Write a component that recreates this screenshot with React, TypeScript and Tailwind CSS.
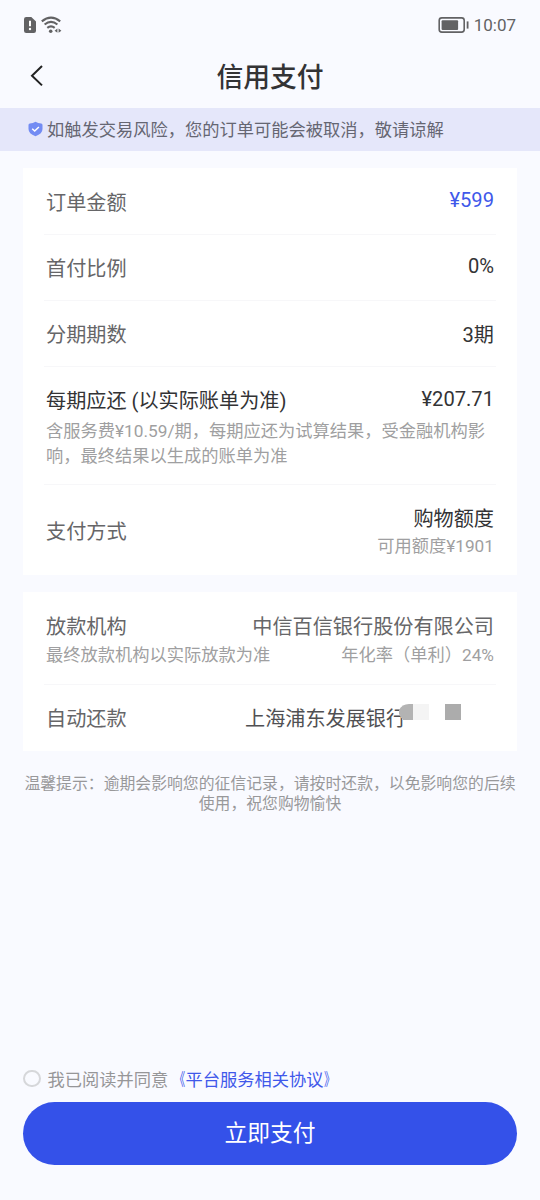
import type { ReactNode } from "react";

function StatusBar() {
  return (
    <div className="flex h-12 items-center justify-between pl-[23px] pr-6 pt-px text-[#626264]">
      <div className="flex items-center gap-[4px]">
        <svg width="14" height="18" viewBox="0 0 14 18">
          <path d="M3.2 1H8.3L13 5.4V14.8Q13 17 10.8 17H3.2Q1 17 1 14.8V3.2Q1 1 3.2 1Z" fill="currentColor" />
          <path d="M7 4.8V10.2" stroke="#fff" strokeWidth="2" />
          <circle cx="7" cy="13" r="1.2" fill="#fff" />
        </svg>
        <svg width="21" height="18" viewBox="0 0 21 18" fill="none" stroke="currentColor">
          <path d="M.8 5.3Q10 -2 19.2 5.3" strokeWidth="2.2" />
          <path d="M3.6 8.5Q10 3.4 16.4 8.5" strokeWidth="2.2" />
          <path d="M6.3 11.8Q10 8.9 13.7 11.8" strokeWidth="2.2" />
          <circle cx="9.7" cy="15.2" r="1.8" fill="currentColor" stroke="none" />
          <path d="M16.4 12.6V16.8L13.6 14.7ZM17.6 12.6V16.8L20.4 14.7Z" fill="currentColor" stroke="none" />
        </svg>
      </div>
      <div className="flex items-center gap-[5px]">
        <svg width="31" height="16" viewBox="0 0 31 16" fill="none">
          <rect x="1.2" y=".9" width="25" height="14.2" rx="2.6" stroke="currentColor" strokeWidth="1.6" />
          <rect x="3.6" y="3.3" width="16.5" height="9.6" rx="1" fill="currentColor" />
          <path d="M29.6 4.4V11.6" stroke="currentColor" strokeWidth="1.8" />
        </svg>
        <span className="text-[17px] leading-5">10:07</span>
      </div>
    </div>
  );
}

function Row({ label, children, className }: { label: string; children: ReactNode; className: string }) {
  return (
    <div className={"flex justify-between border-[#f7f7f9] px-[2px] text-[20.15px] leading-6 " + className}>
      <span className="text-[#666668]">{label}</span>
      {children}
    </div>
  );
}

export default function App() {
  return (
    <div className="flex h-[1200px] w-[540px] flex-col bg-[#f9faff] font-[Roboto,'Noto_Sans_CJK_SC',sans-serif] text-[#333335]">
      <StatusBar />
      <header className="grid h-[60px] grid-cols-[60px_1fr_60px] items-center pb-1">
        <svg className="ml-[29px]" width="16" height="24" viewBox="0 0 16 24" fill="none" stroke="#222" strokeWidth="2">
          <path d="M13 2L3 11.7L13 21.4" />
        </svg>
        <h1 className="pt-[3px] text-center text-[26.8px] font-medium leading-8">信用支付</h1>
      </header>

      <div className="flex h-[43px] items-center bg-[#e5e7fa] pl-7">
        <svg className="-mt-px" width="15" height="16" viewBox="0 0 15 16">
          <path d="M7.5 .8Q10 2.4 13.2 2.6Q14.5 2.7 14.5 4V8Q14.5 12.8 7.5 15.2Q.5 12.8 .5 8V4Q.5 2.7 1.8 2.6Q5 2.4 7.5 .8Z" fill="#738cf3" />
          <path d="M4.2 7.7L6.7 10L10.9 6" fill="none" stroke="#fff" strokeWidth="1.5" />
        </svg>
        <span className="ml-1 text-[17.25px] leading-6 text-[#656672]">如触发交易风险，您的订单可能会被取消，敬请谅解</span>
      </div>

      <section className="mx-[23px] mt-[17px] h-[407px] bg-white px-[21px]">
        <Row label="订单金额" className="h-[67px] border-b pt-[23px]">
          <span className="-mt-[3px] text-[#4058ea]">¥599</span>
        </Row>
        <Row label="首付比例" className="h-[66px] border-b pt-[22px]">
          <span className="-mt-[3px]">0%</span>
        </Row>
        <Row label="分期期数" className="h-[66px] border-b pt-[22px]">
          <span>3期</span>
        </Row>
        <div className="h-[118px] border-b border-[#f7f7f9] px-[2px] pt-[22px]">
          <div className="flex justify-between text-[20.15px] leading-6">
            <span>每期应还 (以实际账单为准)</span>
            <span className="-mt-[2px]">¥207.71</span>
          </div>
          <p className="mt-[6px] text-[17.25px] leading-[25px] text-[#9f9fa1]">
            含服务费¥10.59/期，每期应还为试算结果，受金融机构影响，最终结果以生成的账单为准
          </p>
        </div>
        <Row label="支付方式" className="h-[90px] items-center pt-[3px]">
          <div className="flex flex-col items-end pt-px">
            <span>购物额度</span>
            <span className="mt-[3px] text-[17.25px] text-[#9f9fa1]">可用额度¥1901</span>
          </div>
        </Row>
      </section>

      <section className="mx-[23px] mt-[17px] h-[159px] bg-white px-[21px]">
        <div className="h-[93px] border-b border-[#f7f7f9] px-[2px] pt-[23px]">
          <div className="flex justify-between text-[20.15px] leading-6 text-[#666668]">
            <span>放款机构</span>
            <span>中信百信银行股份有限公司</span>
          </div>
          <div className="mt-1 flex justify-between text-[17.25px] leading-6 text-[#9f9fa1]">
            <span>最终放款机构以实际放款为准</span>
            <span>年化率（单利）24%</span>
          </div>
        </div>
        <Row label="自动还款" className="h-[66px] pt-[22px]">
          <div className="relative w-[249px] text-[#505053]">
            上海浦东发展银行
            <svg className="absolute -top-[5px] left-[153px]" width="96" height="32" viewBox="0 0 96 32">
              <path d="M8 1H96V32H8V22L5 21V18L1 12Q2 1 8 1Z" fill="#fff" />
              <path d="M15 2H11Q4 2 1 8V12L5 18H15Z" fill="#b3b3b3" />
              <path d="M15 2H31V18H15Z" fill="#f4f4f4" />
              <path d="M47 2H63V18H47Z" fill="#acacac" />
            </svg>
          </div>
        </Row>
      </section>

      <p className="mt-[23px] text-center text-[15.85px] leading-5 text-[#98989a]">
        温馨提示：逾期会影响您的征信记录，请按时还款，以免影响您的后续
        <br />
        使用，祝您购物愉快
      </p>

      <footer className="mt-auto px-[23px] pb-[35px]">
        <label className="flex h-6 items-center pt-px text-[17.25px] leading-6 text-[#969698]">
          <span className="-mt-[2px] mr-[7px] size-[17.5px] rounded-full border-2 border-[#d6d7da]" />
          我已阅读并同意
          <span className="flex text-[#4058ea]">
            <span className="origin-right scale-x-65">《</span>
            平台服务相关协议
            <span className="origin-left scale-x-65">》</span>
          </span>
        </label>
        <button className="mt-[11px] h-[63px] w-full rounded-full bg-[#3451e9] pt-px text-[22.8px] leading-8 text-white">
          立即支付
        </button>
      </footer>
    </div>
  );
}
